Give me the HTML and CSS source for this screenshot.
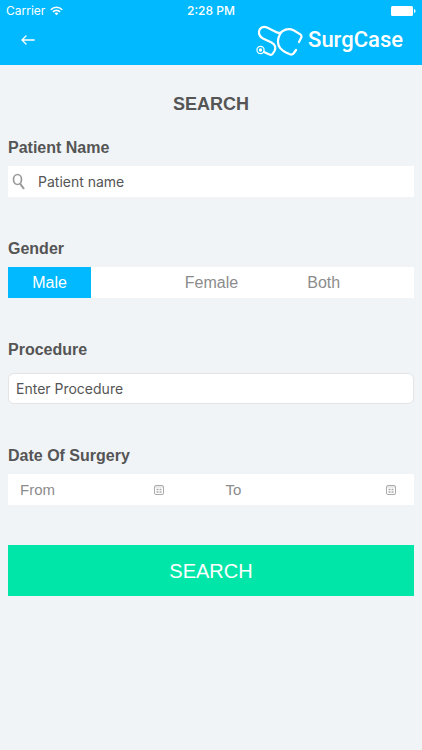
FILE: index.html
```
<!DOCTYPE html>
<html lang="en">

<head>
    <title>SurgCase</title>
    <meta charset="UTF-8" />
    <meta name="viewport" content="width=device-width,initial-scale=1" />
    <link rel="stylesheet" href="styles.css">
</head>

<body>
    <header class="header">
        <div class="status">
            <div class="carrier">
                <span>Carrier</span>
                <svg width="13" height="10" viewBox="0 0 13 10" fill="none" stroke="currentColor" stroke-width="1.6">
                    <path d="M.8 3.8C4 .3 9 .3 12.2 3.8M2.9 5.9C5 3.8 8 3.8 10.1 5.9" />
                    <path d="M4.6 7.3Q6.5 5.9 8.4 7.3L6.5 9.3z" fill="currentColor" stroke="none" />
                </svg>
            </div>
            <time>2:28 PM</time>
            <svg class="battery" width="25" height="10" viewBox="0 0 25 10" fill="currentColor">
                <rect width="22" height="10" rx="1.5" />
                <path d="M23 3q1.6.4 1.6 2T23 7z" />
            </svg>
        </div>
        <div class="navbar">
            <button class="back" type="button" aria-label="Back">
                <svg width="14" height="10" viewBox="0 0 14 10" fill="none" stroke="currentColor" stroke-width="1.3" stroke-linecap="round">
                    <path d="M13.2 5H1M5 1L1 5l4 4" />
                </svg>
            </button>
            <a class="brand" href="#">
                <svg width="48" height="36" viewBox="256 20 48 36" fill="none" stroke="currentColor" stroke-width="2.2" stroke-linecap="round" stroke-linejoin="round">
                    <path d="M282 30.500Q279.500 31.500 277 30L268 25.600C264 23.700 260.500 26 260 29.500C259.600 33 261.500 35 264 36.500L272.500 40.500C276.500 42.500 277 46 275.500 49L273.500 52Q272.500 53.500 270.500 52.600L265 50" />
                    <path d="M300 40L302.300 35.500Q303 33.500 301.300 32.400L295 28.500C289 25.500 283 28 281 32C278 38 278.500 43 281.500 46.500Q284 49 287 50.500L291 52.300Q293 53 294.500 51.500L297 48" />
                    <circle cx="261.500" cy="48" r="3.600" stroke-width="1.200" />
                    <circle cx="261.500" cy="48" r="1.700" fill="currentColor" stroke="none" />
                </svg>
                <span>SurgCase</span>
            </a>
        </div>
    </header>
    <main>
        <h1>SEARCH</h1>
        <form>
            <div class="field">
                <label class="title" for="patient_name">Patient Name</label>
                <div class="box search">
                    <svg width="14" height="18" viewBox="0 0 14 18" fill="none" stroke="currentColor">
                        <ellipse cx="5.500" cy="6.500" rx="4" ry="5" stroke-width="1.700" />
                        <path d="M8.300 10.800L12 16" stroke-width="2" />
                    </svg>
                    <input id="patient_name" type="text" placeholder="Patient name">
                </div>
            </div>
            <fieldset class="field">
                <legend class="title">Gender</legend>
                <div class="box gender">
                    <label class="male"><input type="radio" name="gender" value="male" checked>Male</label>
                    <label class="female"><input type="radio" name="gender" value="female">Female</label>
                    <label class="both"><input type="radio" name="gender" value="both">Both</label>
                </div>
            </fieldset>
            <div class="field procedure">
                <label class="title" for="procedure">Procedure</label>
                <input class="box" id="procedure" type="text" placeholder="Enter Procedure">
            </div>
            <fieldset class="field surgery">
                <legend class="title">Date Of Surgery</legend>
                <div class="box dates">
                    <label class="date">
                        <input type="text" placeholder="From" aria-label="From">
                        <svg width="10" height="10" viewBox="0 0 10 10" fill="none" stroke="currentColor">
                            <rect x=".5" y=".5" width="9" height="9" rx="1.500" />
                            <path d="M1 2h8" stroke-width=".5" />
                            <path d="M2.500 4.500h2M5.500 4.500h2M2.500 7h2M5.500 7h2" stroke-width="1.300" />
                        </svg>
                    </label>
                    <label class="date">
                        <input type="text" placeholder="To" aria-label="To">
                        <svg width="10" height="10" viewBox="0 0 10 10" fill="none" stroke="currentColor">
                            <rect x=".5" y=".5" width="9" height="9" rx="1.500" />
                            <path d="M1 2h8" stroke-width=".5" />
                            <path d="M2.500 4.500h2M5.500 4.500h2M2.500 7h2M5.500 7h2" stroke-width="1.300" />
                        </svg>
                    </label>
                </div>
            </fieldset>
            <button class="submit" type="submit">SEARCH</button>
        </form>
    </main>
</body>

</html>
```
FILE: styles.css
```
* {
    box-sizing: border-box;
}

/* Variables */
:root {
    --text-color: #555;
    --light-text-color: #8c8c8c;
    --primary-color: #00b9ff;
    --secondary-color: #00e6a8;
    --background-color: #f0f4f7;
}

body {
    margin: 0;
    background: var(--background-color);
    color: var(--text-color);
    font: 16px/20px "Liberation Sans", Arial, sans-serif;
}

input,
button {
    font: inherit;
    color: inherit;
    margin: 0;
    padding: 0;
    border: 0;
    background: none;
}

svg {
    display: block;
    flex: none;
}

/* Header */
.header {
    background: var(--primary-color);
    color: #fff;
    padding-bottom: 7px;
}

.status {
    display: grid;
    grid-template-columns: 1fr auto 1fr;
    align-items: center;
    height: 22px;
    padding: 0 6px;
    font: 12px/22px Inter, sans-serif;
}

.status time {
    font-weight: 500;
}

.carrier {
    display: flex;
    align-items: center;
    gap: 5px;
}

.battery {
    justify-self: end;
}

.navbar {
    display: flex;
    align-items: center;
    justify-content: space-between;
    height: 36px;
    padding: 0 19px 0 21px;
}

.brand {
    display: flex;
    align-items: center;
    gap: 5px;
    color: inherit;
    font: 500 22px/36px Roboto, sans-serif;
    text-decoration: none;
}

/* Form */
main {
    padding: 28px 8px;
}

h1 {
    margin: 0 0 23px;
    font-size: 18px;
    line-height: 22px;
    text-align: center;
}

.field {
    min-width: 0;
    margin: 0 0 42px;
    padding: 0;
    border: 0;
}

.title {
    display: block;
    margin-bottom: 8px;
    padding: 0;
    font-weight: bold;
    line-height: 20px;
}

.box {
    display: flex;
    align-items: center;
    width: 100%;
    height: 31px;
    background: #fff;
}

::placeholder {
    color: inherit;
    opacity: 1;
}

.search {
    gap: 12px;
    padding: 0 4px;
}

.search svg {
    color: #999;
}

.search input {
    flex: 1;
    min-width: 0;
    font: 14px/20px Inter, sans-serif;
}

.gender {
    display: grid;
    grid-template-columns: 83fr 64fr 112fr 112fr 34fr;
    align-items: stretch;
    color: var(--light-text-color);
    line-height: 31px;
    text-align: center;
}

.gender input {
    appearance: none;
    position: absolute;
}

.male {
    grid-column: 1;
}

.female {
    grid-column: 3;
}

.both {
    grid-column: 4;
}

.gender label:has(:checked) {
    background: var(--primary-color);
    color: #fff;
}

.procedure .title {
    margin-bottom: 13px;
}

.procedure .box {
    padding: 0 7px;
    border: 1px solid #e2e4e6;
    border-radius: 6px;
    font: 14px/20px Inter, sans-serif;
}

.surgery {
    margin-bottom: 40px;
}

.dates {
    display: grid;
    grid-template-columns: 174fr 231fr;
    color: var(--light-text-color);
    font-size: 15px;
}

.date {
    display: flex;
    align-items: center;
    min-width: 0;
    padding: 0 18px 0 12px;
}

.date + .date {
    padding-left: 43px;
}

.date input {
    flex: 1;
    min-width: 0;
}

.date svg {
    color: #aaa;
}

.submit {
    display: block;
    width: 100%;
    height: 51px;
    background: var(--secondary-color);
    color: #fff;
    font-size: 20px;
}
```
